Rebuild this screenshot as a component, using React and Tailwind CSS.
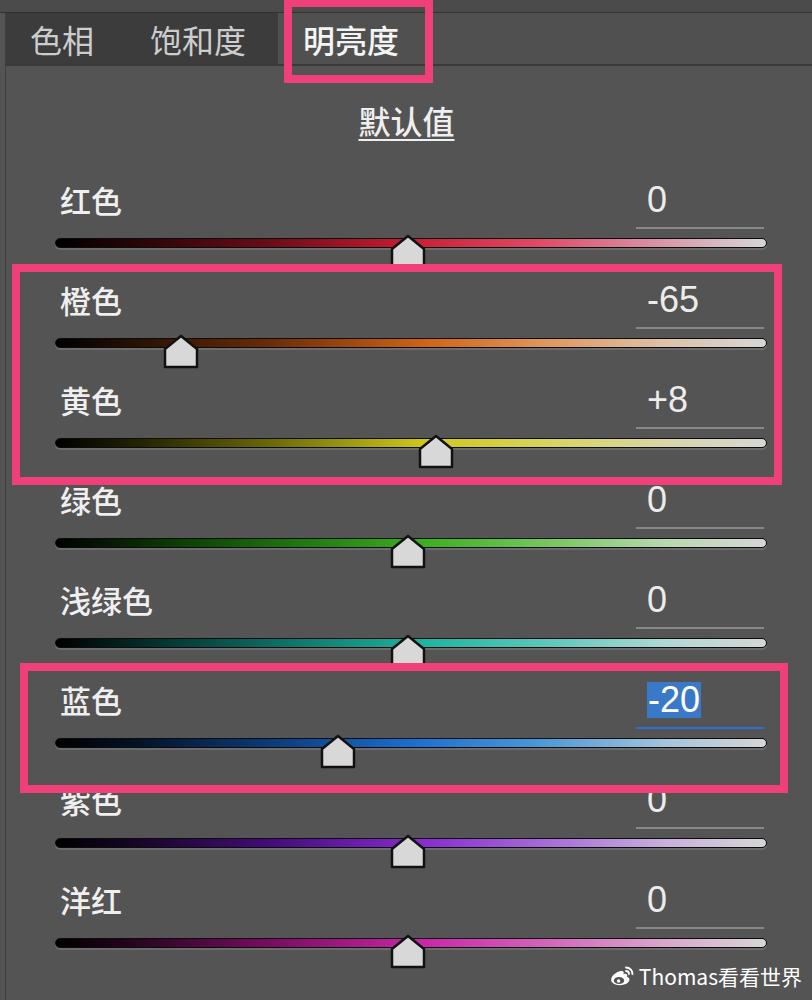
// App.jsx

import React from 'react';

// ! Slider rows: label, value, gradient class (written out in full)
const ROWS = [
  {
    label: '红色',
    value: 0,
    track:
      'bg-[linear-gradient(to_right,#000_0%,#2a0508_12%,#6a0c18_30%,#c81e32_50%,#e04a68_68%,#d890a4_84%,#d6d6d6_100%)]',
  },
  {
    label: '橙色',
    value: -65,
    track:
      'bg-[linear-gradient(to_right,#000_0%,#2a1204_12%,#6a2c08_30%,#d06414_52%,#e09a60_70%,#dcc2aa_86%,#d6d6d6_100%)]',
  },
  {
    label: '黄色',
    value: 8,
    track:
      'bg-[linear-gradient(to_right,#000_0%,#242404_12%,#6a6808_30%,#d0c81a_52%,#d8d460_70%,#d8d6a8_86%,#d6d6d6_100%)]',
  },
  {
    label: '绿色',
    value: 0,
    track:
      'bg-[linear-gradient(to_right,#000_0%,#082a04_12%,#1a6a0c_30%,#3cb020_52%,#78c860_70%,#b8d8b0_86%,#d6d6d6_100%)]',
  },
  {
    label: '浅绿色',
    value: 0,
    track:
      'bg-[linear-gradient(to_right,#000_0%,#042a26_12%,#0c6a60_30%,#20b4a0_52%,#60c8bc_70%,#b0d8d4_86%,#d6d6d6_100%)]',
  },
  {
    label: '蓝色',
    value: -20,
    selected: true,
    track:
      'bg-[linear-gradient(to_right,#000_0%,#04142a_12%,#0c3a78_30%,#1a6ed0_50%,#4a98d8_68%,#a4c4dc_86%,#d6d6d6_100%)]',
  },
  {
    label: '紫色',
    value: 0,
    track:
      'bg-[linear-gradient(to_right,#000_0%,#18062a_12%,#420c78_30%,#8a2cd0_52%,#a870d8_70%,#c8b0dc_86%,#d6d6d6_100%)]',
  },
  {
    label: '洋红',
    value: 0,
    track:
      'bg-[linear-gradient(to_right,#000_0%,#2a0622_12%,#780c60_30%,#c828a8_52%,#d468bc_70%,#d8a8cc_86%,#d6d6d6_100%)]',
  },
];

// * Thumb drawn as the little "house" shape
const Thumb = () => (
  <svg width="36" height="35" viewBox="0 0 36 35">
    <polygon
      points="2,15 18,2 34,15 34,33 2,33"
      fill="#d8d8d8"
      stroke="#111"
      strokeWidth="2.5"
      strokeLinejoin="round"
    />
  </svg>
);

// * Weibo mark for the watermark
const WeiboLogo = () => (
  <svg width="26" height="22" viewBox="0 0 26 22">
    <path
      d="M10 6.5C4.5 8.5 1 13 2.5 16.5C4.5 20.5 13.5 21.5 18.5 18C21.5 15.5 21 12.5 18 12C19 9.5 17.5 8 14.5 9C15.5 6 13.5 5.5 10 6.5Z"
      fill="white"
    />
    <ellipse cx="10" cy="15.5" rx="5.2" ry="3.6" fill="#545454" />
    <circle cx="9.6" cy="16" r="1.7" fill="white" />
    <path d="M17 2.5A6.5 6.5 0 0 1 23.5 9" stroke="white" strokeWidth="2" fill="none" strokeLinecap="round" />
    <path d="M17 6A3 3 0 0 1 20 9" stroke="white" strokeWidth="1.8" fill="none" strokeLinecap="round" />
  </svg>
);

// ========================================================================== //
// ! COMPONENT: SliderRow
// ========================================================================== //
const SliderRow = ({ label, value, track, selected }) => {
  const text = value > 0 ? `+${value}` : `${value}`;
  const left = 353 + value * 3.5 - 18; // * thumb center, 3.5px per step

  return (
    <div className="h-[100px] pl-[49px]">
      {/* --- Label + value --- */}
      <div className="h-[62px] flex justify-between">
        <div className="pl-[5px] pt-[14px] text-[31px] leading-[31px] font-medium text-[#efefef]">
          {label}
        </div>
        <div className="w-[128px] mr-[48px] pt-[12px] flex flex-col">
          <div className="pl-[11px] h-[36px] flex items-center font-['Liberation_Sans',sans-serif] text-[36px] leading-[36px] text-[#ececec]">
            <span className={selected ? 'bg-[#3a78c8] px-[1px] text-white' : ''}>{text}</span>
          </div>
          <div className={`mt-[9px] h-[2px] ${selected ? 'bg-[#2c6fd6]' : 'bg-[#888888]'}`} />
        </div>
      </div>

      {/* --- Track + thumb --- */}
      <div className="relative h-[38px]">
        <div
          className={`mt-[6px] w-[712px] h-[10px] rounded-full border-[1.5px] border-[#0c0c0c] shadow-[0_2px_0_#6c6c6c] ${track}`}
        />
        <div className="absolute top-[-4px]" style={{ left }}>
          <Thumb />
        </div>
      </div>
    </div>
  );
};

// ========================================================================== //
// ! COMPONENT: App
// ========================================================================== //
export default function App() {
  return (
    <div className="relative w-[812px] h-[1000px] overflow-hidden bg-[#545454] flex flex-col font-['Noto_Sans_CJK_SC',sans-serif]">
      {/* --- Top strip --- */}
      <div className="h-[13px] shrink-0 bg-[#4b4b4b] border-b border-[#333]" />

      <div className="flex-1 ml-[5px] border-l border-[#3e3e3e]">
        {/* --- Tabs --- */}
        <div className="flex h-[53px] border-b-2 border-[#3a3a3a]">
          <div className="w-[272px] bg-[#3c3c3c] flex items-center pl-[24px] gap-[56px] text-[32px] text-[#cdcdcd]">
            <span>色相</span>
            <span>饱和度</span>
          </div>
          <div className="pl-[25px] flex items-center text-[32px] font-medium text-[#f4f4f4] bg-[#505050] w-[150px]">
            明亮度
          </div>
          <div className="flex-1 bg-[#505050]" />
        </div>

        {/* --- Header --- */}
        <div className="h-[104px] pt-[37px] flex justify-center">
          <span className="pr-[5px] text-[32px] leading-[34px] font-medium text-[#efefef] underline underline-offset-[5px] decoration-2">
            默认值
          </span>
        </div>

        {/* --- Rows --- */}
        {ROWS.map((row) => (
          <SliderRow key={row.label} {...row} />
        ))}
      </div>

      {/* --- Highlight boxes (annotation overlay) --- */}
      <div className="absolute left-[284px] top-[-1px] w-[149px] h-[84px] border-[8px] border-[#f0407a]" />
      <div className="absolute left-[12px] top-[264px] w-[770px] h-[221px] border-[8px] border-[#f0407a]" />
      <div className="absolute left-[20px] top-[663px] w-[768px] h-[130px] border-[8px] border-[#f0407a]" />

      {/* --- Watermark --- */}
      <div className="absolute right-[10px] bottom-[12px] flex items-center gap-[4px] text-[21px] leading-[24px] text-white">
        <WeiboLogo />
        <span>Thomas看看世界</span>
      </div>
    </div>
  );
}
